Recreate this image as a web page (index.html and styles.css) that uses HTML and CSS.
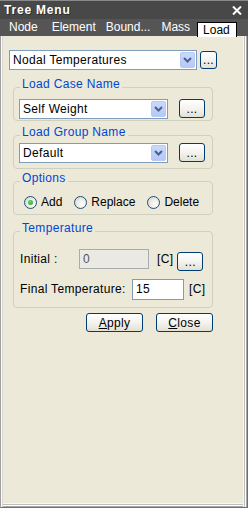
FILE: index.html
```html
<!DOCTYPE html>
<html>
<head>
<meta charset="utf-8">
<title>Tree Menu</title>
<link rel="stylesheet" href="styles.css">
</head>
<body>
<div class="window">
  <div class="titlebar">
    <span class="title">Tree Menu</span>
    <span class="close"><svg width="10" height="9" viewBox="0 0 10 9"><path d="M1 0.5 L9 8.5 M9 0.5 L1 8.5" stroke="#fff" stroke-width="2" fill="none"/></svg></span>
  </div>
  <div class="tabs">
    <span class="tab">Node</span>
    <span class="tab tab-element">Element</span>
    <span class="tab">Bound...</span>
    <span class="tab tab-mass">Mass</span>
    <span class="tab active">Load</span>
  </div>
  <div class="panel">
    <div class="main-row">
      <div class="combo combo-main">
        <span class="combo-text">Nodal Temperatures</span>
        <span class="arrow"><svg width="9" height="6" viewBox="0 0 9 6"><path d="M1 1 L4.5 4.5 L8 1" stroke="#4d6185" stroke-width="2" fill="none"/></svg></span>
      </div>
      <button class="btn btn-dots btn-small">...</button>
    </div>

    <div class="group g1">
      <div class="legend">Load Case Name</div>
      <div class="group-row r1">
        <div class="combo combo-group">
          <span class="combo-text">Self Weight</span>
          <span class="arrow"><svg width="9" height="6" viewBox="0 0 9 6"><path d="M1 1 L4.5 4.5 L8 1" stroke="#4d6185" stroke-width="2" fill="none"/></svg></span>
        </div>
        <button class="btn btn-dots btn-wide">...</button>
      </div>
    </div>

    <div class="group g2">
      <div class="legend">Load Group Name</div>
      <div class="group-row r2">
        <div class="combo combo-group">
          <span class="combo-text">Default</span>
          <span class="arrow"><svg width="9" height="6" viewBox="0 0 9 6"><path d="M1 1 L4.5 4.5 L8 1" stroke="#4d6185" stroke-width="2" fill="none"/></svg></span>
        </div>
        <button class="btn btn-dots btn-wide">...</button>
      </div>
    </div>

    <div class="group g3">
      <div class="legend">Options</div>
      <div class="radio-row">
        <label class="radio-item"><span class="radio checked"></span><span>Add</span></label>
        <label class="radio-item"><span class="radio"></span><span>Replace</span></label>
        <label class="radio-item"><span class="radio"></span><span>Delete</span></label>
      </div>
    </div>

    <div class="group g4">
      <div class="legend">Temperature</div>
      <div class="temp-row t1">
        <span class="field-label label-initial">Initial :</span>
        <span class="textbox disabled tb-initial">0</span>
        <span class="unit unit-initial">[C]</span>
        <button class="btn btn-dots btn-wide btn-initial">...</button>
      </div>
      <div class="temp-row t2">
        <span class="field-label label-final">Final Temperature:</span>
        <span class="textbox tb-final">15</span>
        <span class="unit unit-final">[C]</span>
      </div>
    </div>

    <div class="actions">
      <button class="btn btn-action"><u>A</u>pply</button>
      <button class="btn btn-action"><u>C</u>lose</button>
    </div>
  </div>
</div>
</body>
</html>
```

FILE: styles.css
```css
* { box-sizing: border-box; }
html, body { margin: 0; padding: 0; }
body {
  width: 248px;
  height: 508px;
  overflow: hidden;
  font-family: "Liberation Sans", Arial, sans-serif;
  font-size: 12px;
  background: #ece9d8;
  color: #000;
}
.window {
  width: 248px;
  height: 508px;
  display: flex;
  flex-direction: column;
}
.titlebar {
  height: 19px;
  background: #484848;
  border-top: 1px solid #8a8a8a;
  display: flex;
  align-items: center;
  justify-content: space-between;
  padding: 0 6px 0 4px;
  color: #fff;
}
.title {
  font-weight: bold;
  letter-spacing: 0.8px;
  line-height: 14px;
  text-shadow: 1px 1px 0 #2e2e2e;
}
.close { display: flex; }
.tabs {
  height: 17px;
  background: #555555;
  display: flex;
  align-items: flex-end;
  padding-left: 9px;
  gap: 10px;
  color: #fff;
  position: relative;
  z-index: 1;
}
.tab {
  line-height: 14px;
  padding-bottom: 2px;
}
.tab-element { margin-left: 4px; }
.tab-mass { margin-left: 1px; }
.tab.active {
  background: #fff;
  color: #000;
  border: 1px solid #000;
  border-bottom: none;
  height: 15px;
  margin-bottom: -1px;
  padding: 0 6px 0 5px;
  margin-left: -3px;
}
.panel {
  flex: 1;
  background: #ece9d8;
  border-left: 1px solid #9d9d9d;
  border-right: 1px solid #6f6f6f;
  border-bottom: 1px solid #6f6f6f;
  box-shadow:
    inset 1px 0 #ffffff,
    inset 2px 0 #d9d7cf,
    inset -1px 0 #a8a8a8,
    inset -2px 0 #ffffff,
    inset -3px 0 #bdbdbd,
    inset -4px 0 #f6f5ee,
    inset 0 -1px #a8a8a8,
    inset 0 -2px #ffffff,
    inset 0 -3px #bdbdbd,
    inset 0 -4px #f6f5ee;
  padding: 14px 0 0 8px;
}
.main-row {
  display: flex;
  align-items: flex-start;
  gap: 3px;
}
.combo {
  display: flex;
  align-items: stretch;
  border: 1px solid #7f9db9;
  background: #fff;
  letter-spacing: 0.33px;
}
.combo-main { width: 188px; height: 20px; }
.combo-group { width: 149px; height: 20px; }
.combo-text {
  flex: 1;
  padding-left: 3px;
  line-height: 18px;
  white-space: nowrap;
  overflow: hidden;
}
.arrow {
  width: 15px;
  margin: 1px;
  border-radius: 2px;
  background: linear-gradient(#c9d9fd, #b4c9f7);
  border: 1px solid #b9c9f2;
  display: flex;
  align-items: center;
  justify-content: center;
}
.btn {
  font-family: "Liberation Sans", Arial, sans-serif;
  font-size: 12px;
  color: #000;
  border: 1px solid #003c74;
  border-radius: 3px;
  background: linear-gradient(#ffffff 0%, #f4f3ee 50%, #e3e0d4 100%);
  padding: 0;
  margin: 0;
  letter-spacing: 0.33px;
}
.btn-dots {
  line-height: 12px;
  display: flex;
  align-items: flex-end;
  justify-content: center;
  padding-bottom: 2px;
}
.btn-small { width: 17px; height: 18px; margin-top: 1px; }
.btn-wide { width: 26px; height: 19px; }
.group {
  margin-left: 4px;
  width: 200px;
  border: 1px solid #d0d0bf;
  border-radius: 4px;
  padding: 0 0 0 5px;
}
.legend {
  margin-top: -11px;
  margin-left: 1px;
  padding: 0 2px;
  width: max-content;
  background: #ece9d8;
  color: #0046d5;
  line-height: 14px;
  letter-spacing: 0.33px;
}
.g1 { margin-top: 17px; height: 34px; }
.g2 { margin-top: 14px; height: 34px; }
.g3 { margin-top: 12px; height: 34px; }
.g4 { margin-top: 16px; height: 77px; }
.group-row {
  display: flex;
  align-items: flex-start;
  gap: 11px;
}
.r1 { margin-top: 8px; }
.r2 { margin-top: 4px; }
.radio-row {
  display: flex;
  align-items: center;
  margin-top: 11px;
  padding-left: 5px;
  gap: 12px;
  line-height: 13px;
}
.radio-item {
  display: flex;
  align-items: center;
  gap: 4px;
}
.radio {
  width: 13px;
  height: 13px;
  border-radius: 50%;
  border: 1px solid #1c5180;
  background: radial-gradient(circle at 65% 65%, #ffffff 0%, #e9e8e0 55%, #cfccc0 100%);
  display: flex;
  align-items: center;
  justify-content: center;
}
.radio.checked::after {
  content: "";
  width: 5px;
  height: 5px;
  border-radius: 50%;
  background: radial-gradient(circle at 40% 40%, #64d964, #21a121);
}
.temp-row {
  display: flex;
  align-items: flex-start;
  letter-spacing: 0.33px;
}
.t1 { margin-top: 14px; height: 22px; }
.t2 { margin-top: 8px; }
.field-label {
  padding-left: 1px;
  line-height: 20px;
  white-space: nowrap;
}
.label-initial { width: 60px; }
.label-final { width: 113px; }
.textbox {
  height: 21px;
  border: 1px solid #7f9db9;
  background: #fff;
  padding: 2px 0 0 3px;
  line-height: 14px;
}
.textbox.disabled {
  background: #ebeae2;
  border-color: #a5acb2;
  color: #555555;
  height: 20px;
}
.tb-initial { width: 70px; }
.tb-final { width: 52px; }
.unit { line-height: 20px; }
.unit-initial { margin-left: 8px; }
.unit-final { margin-left: 5px; line-height: 21px; }
.btn-initial { margin-left: 4px; margin-top: 3px; }
.actions {
  display: flex;
  justify-content: flex-end;
  gap: 13px;
  width: 204px;
  margin-top: 5px;
}
.btn-action {
  width: 57px;
  height: 19px;
  line-height: 16px;
}
.btn-action u { text-decoration: underline; }
```
